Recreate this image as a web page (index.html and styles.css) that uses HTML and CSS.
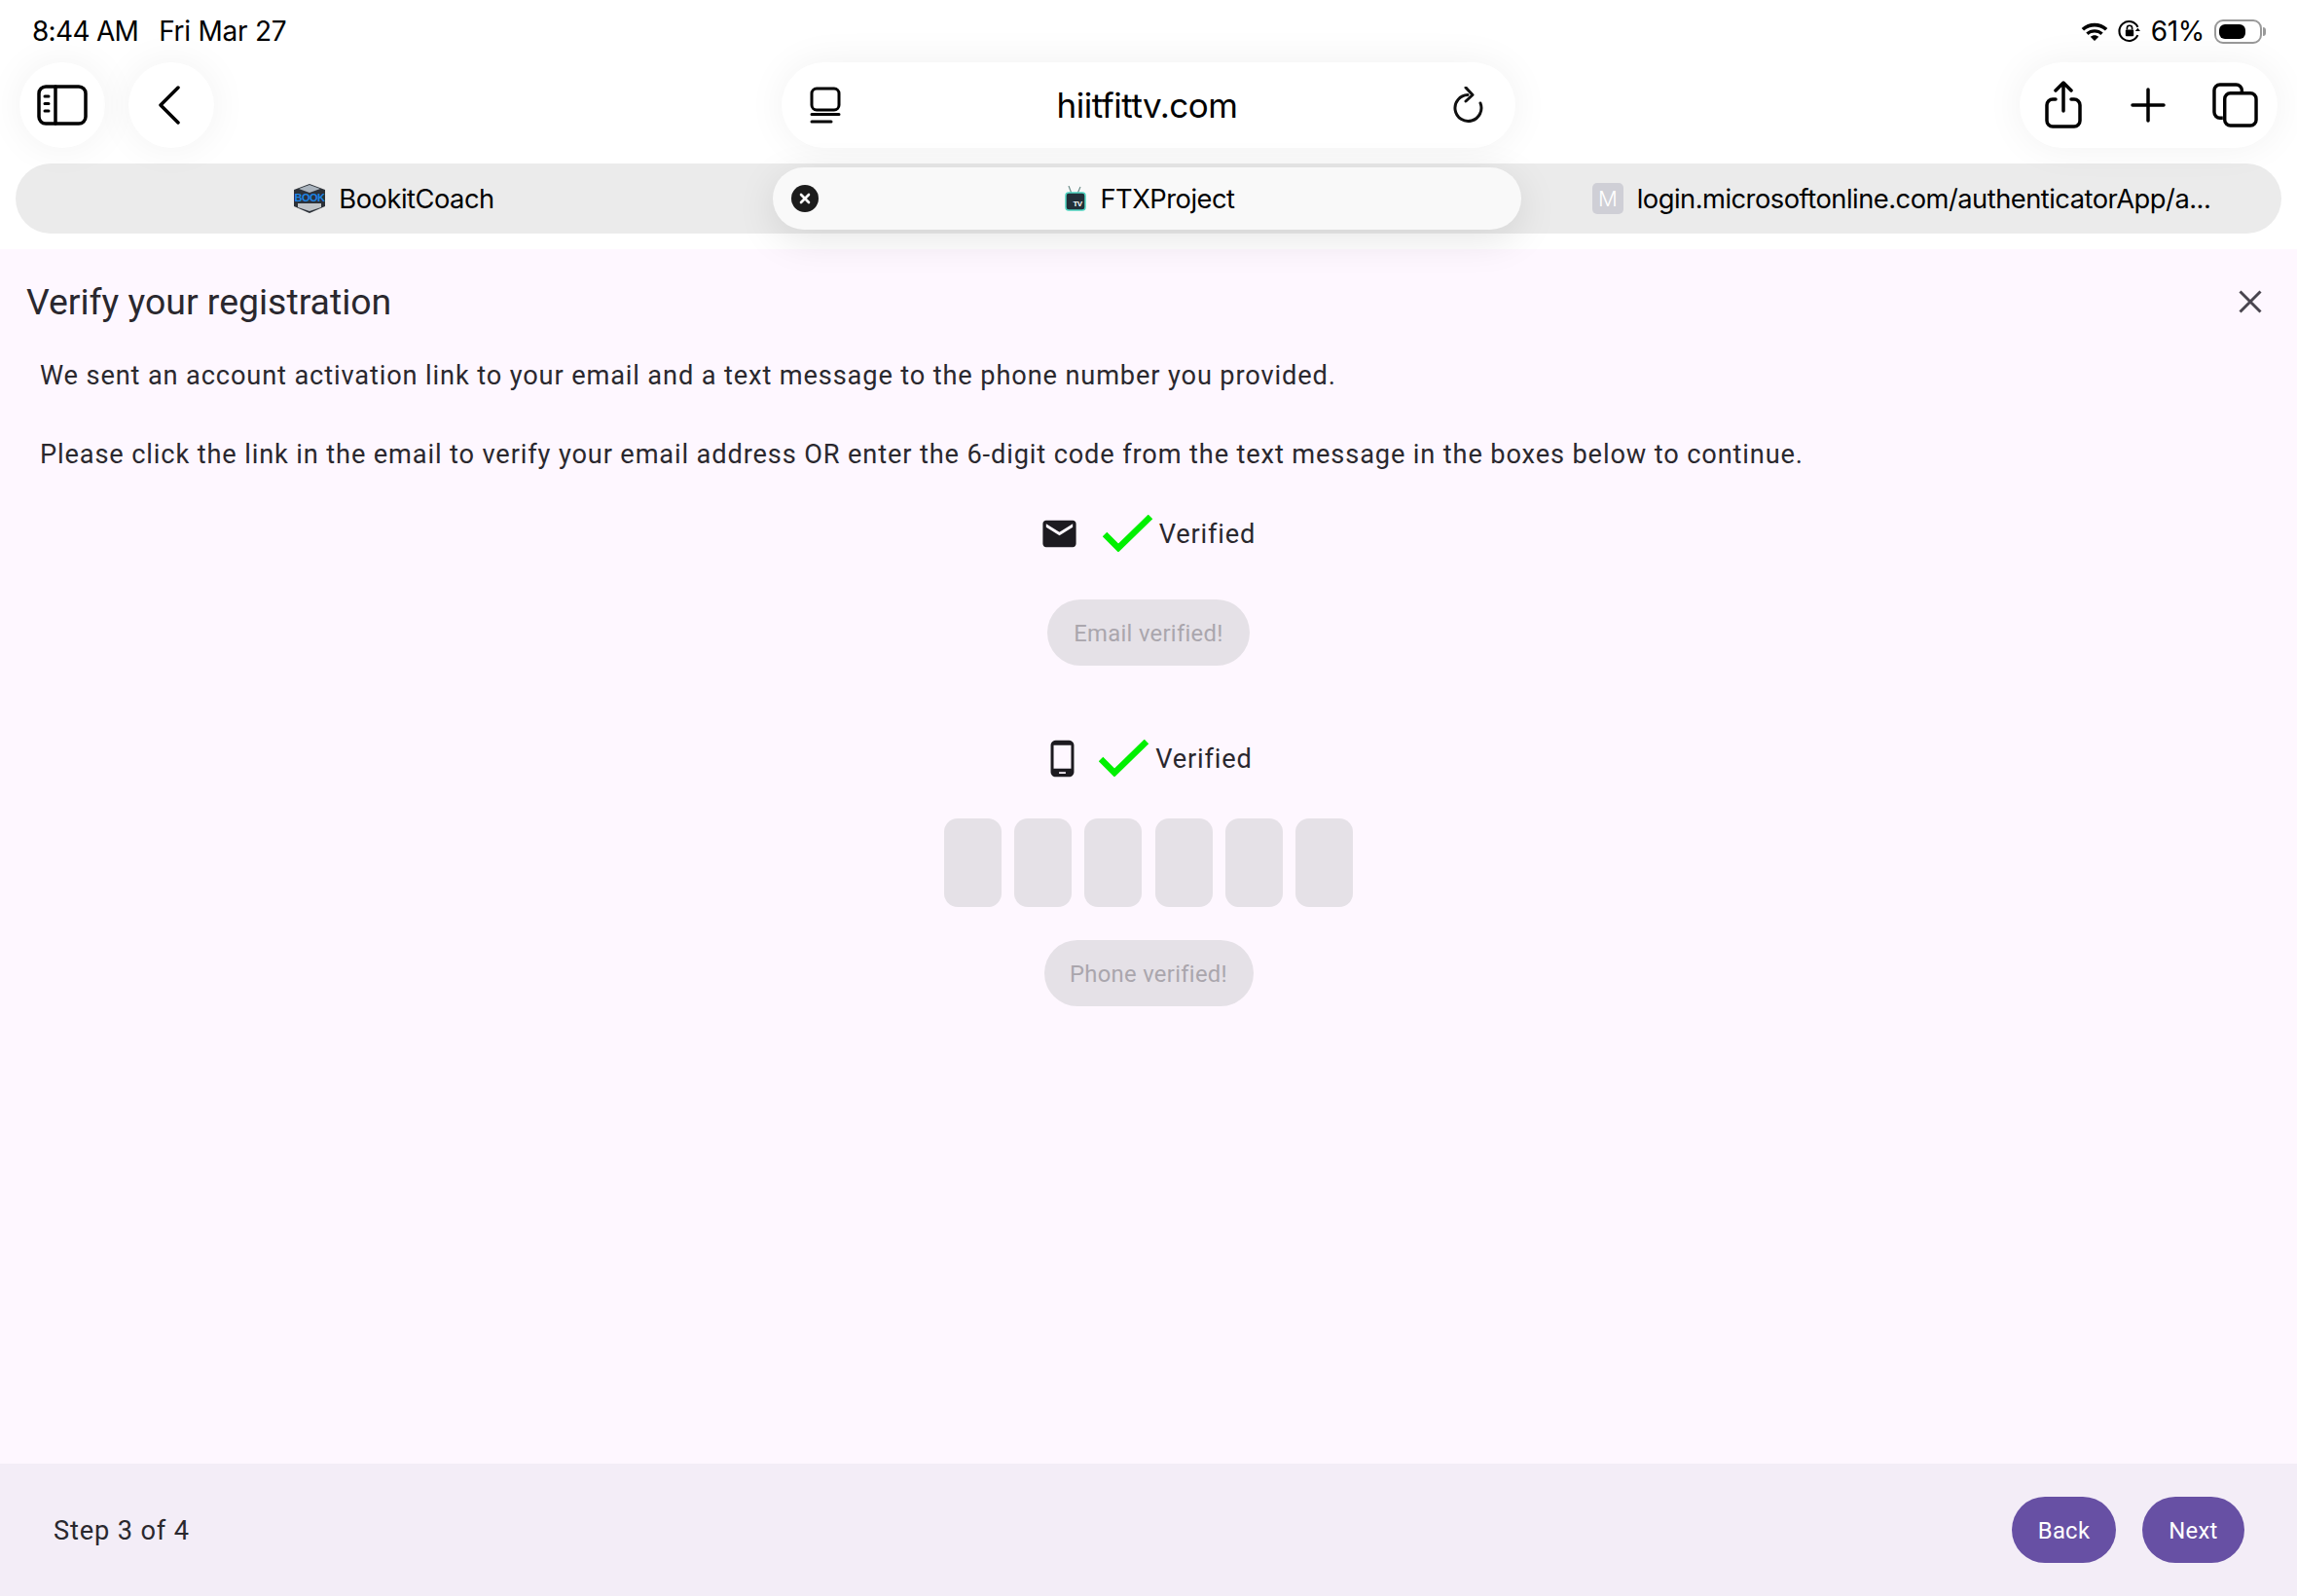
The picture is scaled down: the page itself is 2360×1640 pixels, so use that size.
FILE: index.html
```html
<!DOCTYPE html>
<html lang="en">
<head>
  <meta charset="UTF-8">
  <title>Verify your registration</title>
  <link rel="stylesheet" href="styles.css">
</head>
<body>
  <header class="chrome">
    <div class="status-bar">
      <div class="status-time"><span>8:44 AM</span><span class="status-date">Fri Mar 27</span></div>
      <div class="status-right">
        <svg class="wifi" width="32" height="23" viewBox="0 0 30 21"><path d="M15 16.500l4 -4c-2.200 -2 -5.800 -2 -8 0zM6.800 8.500l2.300 2.300c3.300 -3 8.500 -3 11.800 0l2.300 -2.300c-4.600 -4.300 -11.800 -4.300 -16.400 0zM2.500 4.300l2.300 2.300c5.700 -5.200 14.700 -5.200 20.400 0l2.300 -2.300c-7 -6.600 -18 -6.600 -25 0z" transform="translate(0 3)"/></svg>
        <svg class="rot-lock" width="24" height="24" viewBox="0 0 23 23" fill="none"><path d="M19.500 15.500a9.500 9.500 0 1 1 0 -8" stroke="#000" stroke-width="2"/><path d="M17 8.500l5 0l-2.500 3z" fill="#000" transform="rotate(180 19.500 10)"/><rect x="7.500" y="10" width="8" height="6.500" rx="1" fill="#000"/><path d="M9 10V8.500a2.500 2.500 0 0 1 5 0V10" stroke="#000" stroke-width="1.600"/></svg>
        <span class="battery-pct">61%</span>
        <div class="battery"><div class="battery-fill"></div></div>
        <div class="battery-nub"></div>
      </div>
    </div>

    <div class="toolbar">
      <div class="toolbar-left">
        <div class="round-btn">
          <svg width="52" height="42" viewBox="0 0 52 42" fill="none" stroke="#000" stroke-width="3.500" stroke-linecap="round"><rect x="2" y="2" width="48" height="38" rx="7"/><path d="M19 2V40"/><path d="M8 12H12M8 19.500H12M8 27H12" stroke-width="3"/></svg>
        </div>
        <div class="round-btn">
          <svg class="back-icon" width="24" height="40" viewBox="0 0 24 40" fill="none" stroke="#000" stroke-width="3.500" stroke-linecap="round" stroke-linejoin="round"><path d="M21 2L3 20L21 38"/></svg>
        </div>
      </div>
      <div class="address-pill">
        <svg width="32" height="38" viewBox="0 0 32 38" fill="none" stroke="#000" stroke-width="3" stroke-linecap="round"><rect x="2" y="2" width="28" height="22" rx="5"/><path d="M2 28.500H30M2 36H22"/></svg>
        <span class="address-text">hiitfittv.com</span>
        <svg width="32" height="38" viewBox="0 0 32 38" fill="none" stroke="#111" stroke-width="3" stroke-linecap="round" stroke-linejoin="round"><path d="M15 8.500A13.500 13.500 0 1 0 28 17"/><path d="M13 1L20 8.500L13 15"/></svg>
      </div>
      <div class="toolbar-right">
        <div class="actions-pill">
          <svg width="40" height="50" viewBox="0 0 40 50" fill="none" stroke="#000" stroke-width="3.500" stroke-linecap="round" stroke-linejoin="round"><path d="M12 19H9a6 6 0 0 0 -6 6V41a6 6 0 0 0 6 6H31a6 6 0 0 0 6 -6V25a6 6 0 0 0 -6 -6H28"/><path d="M20 31V3M12 10L20 2L28 10"/></svg>
          <svg width="36" height="36" viewBox="0 0 36 36" fill="none" stroke="#000" stroke-width="3.500" stroke-linecap="round"><path d="M18 2V34M2 18H34"/></svg>
          <svg width="47" height="46" viewBox="0 0 48 47" fill="none" stroke="#000" stroke-width="3.500" stroke-linejoin="round"><path d="M11 37H8a6 6 0 0 1 -6 -6V8a6 6 0 0 1 6 -6H25a6 6 0 0 1 6 6V11"/><rect x="13" y="11" width="33" height="34" rx="6"/></svg>
        </div>
      </div>
    </div>

    <nav class="tab-bar">
      <div class="tab tab-first">
        <svg class="favicon" width="32" height="30" viewBox="0 0 32 30"><path d="M16 0L32 6V23L16 30L0 23V6Z" fill="#2c3138"/><path d="M5 5L16 1L27 5L16 9Z" fill="#aab4be"/><text class="favicon-book" x="16" y="18" font-size="11">BOOK</text><path d="M4 20L28 20L28 24L16 28L4 24Z" fill="#bfc4c8"/></svg>
        <span>BookitCoach</span>
      </div>
      <div class="tab tab-active">
        <div class="tab-close">
          <svg width="12" height="12" viewBox="0 0 12 12" stroke="#fff" stroke-width="2.600" stroke-linecap="round"><path d="M2 2L10 10M10 2L2 10"/></svg>
        </div>
        <svg class="favicon" width="22" height="26" viewBox="0 0 22 26"><path d="M7 8L4 0M13 8L16 1" stroke="#6d8f8b" stroke-width="1.200"/><rect x="1" y="7" width="20" height="18" rx="3" fill="#223039" stroke="#4fd6c2" stroke-width="1.500"/><text class="favicon-label" x="13" y="21" font-size="8">TV</text></svg>
        <span>FTXProject</span>
      </div>
      <div class="tab">
        <div class="favicon-m">M</div>
        <span>login.microsoftonline.com/authenticatorApp/a...</span>
      </div>
    </nav>
  </header>

  <main class="content">
    <div class="title-row">
      <h1>Verify your registration</h1>
      <svg width="24" height="24" viewBox="0 0 24 24" stroke="#49454f" stroke-width="3" fill="none"><path d="M1.500 1.500L22.500 22.500M22.500 1.500L1.500 22.500"/></svg>
    </div>

    <div class="message">
      <p>We sent an account activation link to your email and a text message to the phone number you provided.</p>
      <p>Please click the link in the email to verify your email address OR enter the 6-digit code from the text message in the boxes below to continue.</p>
    </div>

    <section class="verify">
      <div class="verify-row verify-row-email">
        <svg class="verify-icon" width="41" height="41" viewBox="0 0 24 24" fill="#1d1b20"><path d="M20 4H4c-1.100 0-1.990.9-1.990 2L2 18c0 1.100.9 2 2 2h16c1.100 0 2-.9 2-2V6c0-1.100-.9-2-2-2zm0 4l-8 5-8-5V6l8 5 8-5v2z"/></svg>
        <svg class="check" width="52" height="38" viewBox="0 0 52 38" fill="none" stroke="#00f000" stroke-width="6.500"><path d="M2 20L16 34L49 2"/></svg>
        <span class="verified-label">Verified</span>
      </div>
      <button class="pill-disabled btn-email">Email verified!</button>

      <div class="verify-row verify-row-phone">
        <svg class="verify-icon" width="41" height="41" viewBox="0 0 24 24" fill="#1d1b20"><path d="M16 1H8C6.340 1 5 2.340 5 4v16c0 1.660 1.340 3 3 3h8c1.660 0 3-1.340 3-3V4c0-1.660-1.340-3-3-3zm-2 20h-4v-1h4v1zm3.250-3H6.750V4h10.500v14z"/></svg>
        <svg class="check" width="52" height="38" viewBox="0 0 52 38" fill="none" stroke="#00f000" stroke-width="6.500"><path d="M2 20L16 34L49 2"/></svg>
        <span class="verified-label">Verified</span>
      </div>
      <div class="code-boxes">
        <div class="code-box"></div>
        <div class="code-box"></div>
        <div class="code-box"></div>
        <div class="code-box"></div>
        <div class="code-box"></div>
        <div class="code-box"></div>
      </div>
      <button class="pill-disabled btn-phone">Phone verified!</button>
    </section>
  </main>

  <footer class="footer">
    <span class="step">Step 3 of 4</span>
    <div class="footer-btns">
      <button class="pill-primary btn-back">Back</button>
      <button class="pill-primary btn-next">Next</button>
    </div>
  </footer>
</body>
</html>
```

FILE: styles.css
```css
* {
  box-sizing: border-box;
}

html, body {
  margin: 0;
  height: 100%;
}

body {
  display: flex;
  flex-direction: column;
  height: 1640px;
  overflow: hidden;
  font-family: Roboto, sans-serif;
  color: #2a282e;
  background-color: #fef7ff;
}

/* browser chrome */
.chrome {
  position: relative;
  z-index: 1;
  height: 256px;
  background-color: #fff;
  font-family: Inter, sans-serif;
  color: #000;
}

.status-bar {
  display: flex;
  justify-content: space-between;
  align-items: center;
  height: 64px;
  padding: 0 32px 0 33px;
  font-size: 28px;
  letter-spacing: -0.7px;
}

.status-time {
  display: flex;
  gap: 21px;
}

.status-date {
  letter-spacing: -0.25px;
}

.status-right {
  display: flex;
  align-items: center;
}

.rot-lock {
  margin-left: 8px;
}

.battery-pct {
  margin-left: 10px;
  letter-spacing: -0.3px;
}

.battery {
  width: 49px;
  height: 25px;
  margin-left: 10px;
  padding: 3px;
  border: 2px solid #999;
  border-radius: 9px;
}

.battery-fill {
  width: 27px;
  height: 100%;
  background-color: #000;
  border-radius: 6px;
}

.battery-nub {
  width: 3px;
  height: 9px;
  margin-left: 1px;
  background-color: #999;
  border-radius: 0 3px 3px 0;
}

.toolbar {
  display: grid;
  grid-template-columns: 1fr 754px 1fr;
  height: 88px;
  padding: 0 20px;
}

.toolbar-left {
  display: flex;
  gap: 24px;
}

.toolbar-right {
  display: flex;
  justify-content: flex-end;
}

.round-btn {
  display: flex;
  justify-content: center;
  align-items: center;
  width: 88px;
  height: 88px;
  background-color: #fff;
  border-radius: 50%;
  box-shadow: 0 0 40px rgba(0, 0, 0, 0.06);
}

.back-icon {
  margin-right: 5px;
}

.address-pill {
  display: flex;
  justify-content: space-between;
  align-items: center;
  padding: 0 32px 0 29px;
  background-color: #fff;
  border-radius: 44px;
  box-shadow: 0 0 40px rgba(0, 0, 0, 0.06);
}

.address-text {
  font-size: 35px;
  letter-spacing: -0.5px;
}

.actions-pill {
  display: flex;
  justify-content: space-between;
  align-items: center;
  width: 265px;
  padding: 0 20px 0 25px;
  background-color: #fff;
  border-radius: 44px;
  box-shadow: 0 0 40px rgba(0, 0, 0, 0.06);
}

.tab-bar {
  display: flex;
  height: 72px;
  margin: 16px 16px 0;
  padding: 4px 0;
  background-color: #ebebeb;
  border-radius: 36px;
  font-size: 27.3px;
  letter-spacing: -0.5px;
}

.tab {
  position: relative;
  flex: 1;
  display: flex;
  justify-content: center;
  align-items: center;
  gap: 14px;
}

.tab-first {
  flex: none;
  width: 778px;
}

.tab-active {
  flex: none;
  width: 769px;
  padding-left: 6px;
  background-color: #f9f9f9;
  border-radius: 32px;
  box-shadow: 0 10px 40px rgba(0, 0, 0, 0.1);
}

.tab-close {
  position: absolute;
  left: 19px;
  top: 18px;
  display: flex;
  justify-content: center;
  align-items: center;
  width: 28px;
  height: 28px;
  background-color: #1c1c1c;
  border-radius: 50%;
}

.favicon-label, .favicon-book {
  font-family: "Liberation Sans", sans-serif;
  font-weight: bold;
  text-anchor: middle;
}

.favicon-label {
  fill: #fff;
}

.favicon-book {
  fill: #1c86e8;
}

.favicon-m {
  display: flex;
  justify-content: center;
  align-items: center;
  width: 32px;
  height: 32px;
  background-color: #cfcfd6;
  border-radius: 5px;
  color: #fff;
  font-size: 22px;
  font-weight: 300;
}

/* page */
.content {
  flex: 1;
}

.title-row {
  display: flex;
  justify-content: space-between;
  align-items: center;
  height: 78px;
  padding: 30px 36px 0 27px;
}

h1 {
  margin: 0;
  font-size: 37.4px;
  font-weight: 400;
}

.message {
  padding: 32px 41px 0;
  font-size: 27.2px;
  line-height: 40px;
  letter-spacing: 0.87px;
}

.message p {
  margin: 0 0 41px;
}

.verify {
  display: flex;
  flex-direction: column;
  align-items: center;
  margin-top: 1px;
}

.verify-row {
  display: flex;
  justify-content: center;
  align-items: center;
  height: 40px;
  font-size: 27.2px;
  letter-spacing: 0.85px;
}

.verified-label {
  padding-top: 2px;
}

.verify-row-email {
  padding-right: 2px;
}

.verify-row-phone {
  margin-top: 75px;
  padding-right: 2px;
}

.verify-icon {
  margin-right: 24px;
}

.verify-row-phone .verify-icon {
  margin-right: 17px;
}

.check {
  margin-right: 6px;
}

.pill-disabled, .pill-primary {
  height: 68px;
  padding-top: 2px;
  border: none;
  border-radius: 34px;
  font-family: Roboto, sans-serif;
  font-size: 23.8px;
  font-weight: 400;
  letter-spacing: 0.3px;
}

.pill-disabled {
  background-color: #e5e1e7;
  color: #aaa6ad;
}

.btn-email {
  width: 208px;
  margin-top: 48px;
}

.btn-phone {
  width: 215px;
  margin-top: 34px;
}

.code-boxes {
  display: flex;
  gap: 13.3px;
  margin-top: 42px;
}

.code-box {
  width: 59px;
  height: 91px;
  background-color: #e5e1e7;
  border-radius: 14px;
}

.footer {
  display: flex;
  justify-content: space-between;
  align-items: center;
  height: 136px;
  padding: 0 54px 0 55px;
  background-color: #f3edf7;
}

.step {
  padding-top: 2px;
  font-size: 27.2px;
  letter-spacing: 0.85px;
}

.footer-btns {
  display: flex;
  gap: 27px;
}

.pill-primary {
  background-color: #6750a4;
  color: #fff;
}

.btn-back {
  width: 107px;
}

.btn-next {
  width: 105px;
}
```
